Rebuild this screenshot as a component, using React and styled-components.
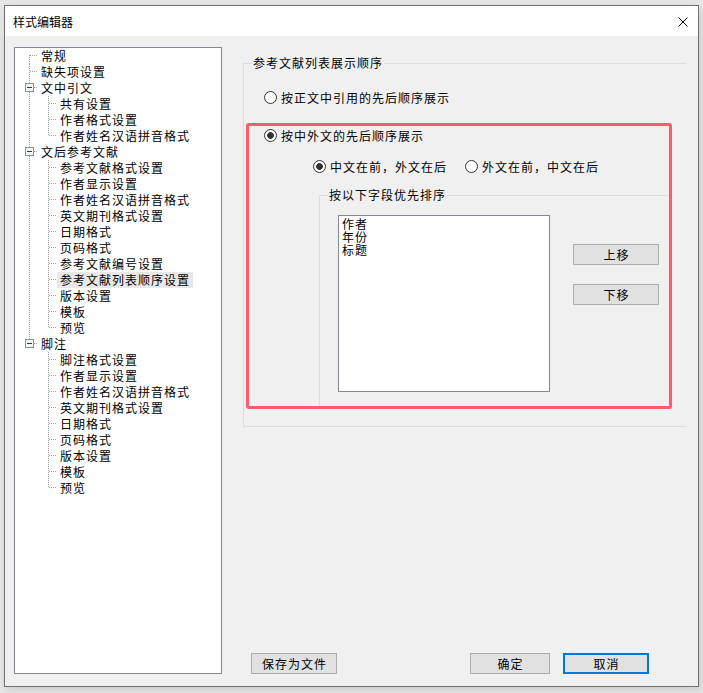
import React from 'react';
import styled, { createGlobalStyle } from 'styled-components';

const GlobalStyle = createGlobalStyle`
  html, body {
    margin: 0;
    padding: 0;
    background: #e6e6e6;
  }
  body {
    font-family: "Noto Sans CJK SC", "Microsoft YaHei", sans-serif;
    font-size: 12px;
    color: #000;
  }
`;

const Screen = styled.div`
  width: 703px;
  height: 693px;
  padding: 5px 0 0 4px;
  box-sizing: border-box;
  overflow: hidden;
`;

const Window = styled.div`
  width: 695px;
  height: 682px;
  box-sizing: border-box;
  border: 1px solid #707070;
  background: #f0f0f0;
  display: flex;
  flex-direction: column;
  box-shadow: 2px 3px 8px rgba(0, 0, 0, 0.12);
`;

const TitleBar = styled.div`
  height: 30px;
  flex-shrink: 0;
  background: #fff;
  display: flex;
  align-items: center;
  justify-content: space-between;
  padding: 2px 10px 0 8px;
  box-sizing: border-box;
`;

const Title = styled.span`
  font-size: 12px;
  line-height: 16px;
`;

const Body = styled.div`
  flex: 1;
  display: flex;
  gap: 21px;
  padding: 11px 12px 12px 9px;
  min-height: 0;
`;

const Tree = styled.div`
  width: 208px;
  height: 627px;
  box-sizing: border-box;
  border: 1px solid #828790;
  background: #fff;
  padding-top: 0;
  flex-shrink: 0;
`;

const TreeRow = styled.div`
  display: flex;
  height: 16px;
  align-items: center;
`;

const Label = styled.span`
  line-height: 16px;
  padding: 0 3px 0 3px;
  letter-spacing: 1px;
  white-space: nowrap;
  background: ${p => (p.$selected ? '#e8e8e8' : 'transparent')};
`;

const RightPane = styled.div`
  width: 446px;
  display: flex;
  flex-direction: column;
`;

const Group = styled.fieldset`
  margin: 0;
  min-width: 0;
  border: 1px solid #dcdcdc;
  border-right: none;
  ${p => p.$open && 'border-bottom: none;'}
`;

const OuterGroup = styled(Group)`
  margin-top: 8px;
  padding: 18px 0 17px 0;
`;

const InnerGroup = styled(Group)`
  margin: 13px 0 0 70px;
  padding: 0;
  flex: 1;
`;

const InnerContent = styled.div`
  display: flex;
  align-items: flex-start;
  padding: 12px 0 0 18px;
`;

const Legend = styled.legend`
  margin-left: 8px;
  padding: 0 1px;
  line-height: 16px;
  letter-spacing: 1px;
`;

const RadioRow = styled.div`
  display: flex;
  gap: 18px;
  margin-left: ${p => p.$indent || 0}px;
  margin-top: ${p => p.$top || 0}px;
`;

const RadioOption = styled.label`
  display: flex;
  align-items: center;
  gap: 4px;
  height: 16px;
  letter-spacing: 1px;
  white-space: nowrap;
`;

const RadioCircle = styled.span`
  width: 13px;
  height: 13px;
  box-sizing: border-box;
  border-radius: 50%;
  border: 1px solid #333;
  background: ${p =>
    p.$checked
      ? 'radial-gradient(circle at center, #333 0 3px, #fff 3.7px)'
      : '#fff'};
  flex-shrink: 0;
`;

const Highlight = styled.div`
  margin: 18px 0 0 2px;
  width: 426px;
  height: 286px;
  box-sizing: border-box;
  border: 3px solid #ff5b6e;
  border-radius: 3px;
  padding-top: 1px;
  display: flex;
  flex-direction: column;
`;

const ListBox = styled.div`
  width: 212px;
  height: 177px;
  box-sizing: border-box;
  border: 1px solid #828790;
  background: #fff;
  padding: 1px 3px;
  flex-shrink: 0;
`;

const ListItem = styled.div`
  line-height: 13px;
  letter-spacing: 1px;
`;

const SideButtons = styled.div`
  display: flex;
  flex-direction: column;
  gap: 19px;
  margin-left: 23px;
  padding-top: 29px;
`;

const Button = styled.button`
  width: ${p => p.$w || 86}px;
  height: 21px;
  box-sizing: border-box;
  border: ${p => (p.$default ? '2px solid #0078d7' : '1px solid #adadad')};
  background: #e1e1e1;
  font-family: inherit;
  font-size: 12px;
  letter-spacing: 1px;
  padding: 0 0 0 1px;
  color: #000;
  line-height: 16px;
`;

const Footer = styled.div`
  margin-top: auto;
  display: flex;
  align-items: center;
  padding: 0 37px 0 8px;
  gap: 13px;
`;

const Spacer = styled.div`
  flex: 1;
`;

const tree = [
  { label: '常规' },
  { label: '缺失项设置' },
  { label: '文中引文', children: ['共有设置', '作者格式设置', '作者姓名汉语拼音格式'] },
  {
    label: '文后参考文献',
    children: [
      '参考文献格式设置', '作者显示设置', '作者姓名汉语拼音格式', '英文期刊格式设置',
      '日期格式', '页码格式', '参考文献编号设置', '参考文献列表顺序设置',
      '版本设置', '模板', '预览',
    ],
  },
  {
    label: '脚注',
    children: [
      '脚注格式设置', '作者显示设置', '作者姓名汉语拼音格式', '英文期刊格式设置',
      '日期格式', '页码格式', '版本设置', '模板', '预览',
    ],
  },
];

const DOT = '#a0a0a0';

// vertical dotted guide: 'full', 'top' (to middle), 'bottom' (from middle), or none
const VLine = ({ x, kind }) => {
  if (!kind) return null;
  const y1 = kind === 'bottom' ? 7 : 0;
  const y2 = kind === 'top' ? 8 : 16;
  return <line x1={x + 0.5} y1={y1} x2={x + 0.5} y2={y2} stroke={DOT} strokeDasharray="1 1" />;
};

const RootCell = ({ vline, elbow, expander }) => (
  <svg width="23" height="16" style={{ flexShrink: 0, display: 'block' }}>
    <VLine x={14} kind={vline} />
    {elbow && (
      <line x1={expander ? 19 : 15} y1={7.5} x2={23} y2={7.5} stroke={DOT} strokeDasharray="1 1" />
    )}
    {expander && (
      <g>
        <rect x="10.5" y="3.5" width="8" height="8" fill="#f6f6f6" stroke="#919191" />
        <line x1="12" y1="7.5" x2="17" y2="7.5" stroke="#1c3d8c" />
      </g>
    )}
  </svg>
);

const ChildCell = ({ last }) => (
  <svg width="19" height="16" style={{ flexShrink: 0, display: 'block' }}>
    <VLine x={10} kind={last ? 'top' : 'full'} />
    <line x1={11} y1={7.5} x2={19} y2={7.5} stroke={DOT} strokeDasharray="1 1" />
  </svg>
);

function buildRows() {
  const rows = [];
  tree.forEach((node, i) => {
    const first = i === 0;
    const last = i === tree.length - 1;
    rows.push(
      <TreeRow key={`r${i}`}>
        <RootCell vline={first ? 'bottom' : last ? 'top' : 'full'} elbow expander={!!node.children} />
        <Label>{node.label}</Label>
      </TreeRow>
    );
    (node.children || []).forEach((c, j) => {
      rows.push(
        <TreeRow key={`r${i}-${j}`}>
          <RootCell vline={last ? null : 'full'} />
          <ChildCell last={j === node.children.length - 1} />
          <Label $selected={c === '参考文献列表顺序设置'}>{c}</Label>
        </TreeRow>
      );
    });
  });
  return rows;
}

const Radio = ({ checked, children }) => (
  <RadioOption>
    <RadioCircle $checked={checked} />
    <span>{children}</span>
  </RadioOption>
);

export default function App() {
  return (
    <Screen>
      <GlobalStyle />
      <Window>
        <TitleBar>
          <Title>样式编辑器</Title>
          <svg width="10" height="10" viewBox="0 0 10 10">
            <path d="M0.5 0.5 L9.5 9.5 M9.5 0.5 L0.5 9.5" stroke="#000" strokeWidth="1" fill="none" />
          </svg>
        </TitleBar>
        <Body>
          <Tree>{buildRows()}</Tree>
          <RightPane>
            <OuterGroup>
              <Legend>参考文献列表展示顺序</Legend>
              <RadioRow $indent={20}>
                <Radio>按正文中引用的先后顺序展示</Radio>
              </RadioRow>
              <Highlight>
                <RadioRow $indent={15}>
                  <Radio checked>按中外文的先后顺序展示</Radio>
                </RadioRow>
                <RadioRow $indent={64} $top={15}>
                  <Radio checked>中文在前，外文在后</Radio>
                  <Radio>外文在前，中文在后</Radio>
                </RadioRow>
                <InnerGroup $open>
                  <Legend>按以下字段优先排序</Legend>
                  <InnerContent>
                    <ListBox>
                      <ListItem>作者</ListItem>
                      <ListItem>年份</ListItem>
                      <ListItem>标题</ListItem>
                    </ListBox>
                    <SideButtons>
                      <Button>上移</Button>
                      <Button>下移</Button>
                    </SideButtons>
                  </InnerContent>
                </InnerGroup>
              </Highlight>
            </OuterGroup>
            <Footer>
              <Button>保存为文件</Button>
              <Spacer />
              <Button $w={80}>确定</Button>
              <Button $default>取消</Button>
            </Footer>
          </RightPane>
        </Body>
      </Window>
    </Screen>
  );
}
